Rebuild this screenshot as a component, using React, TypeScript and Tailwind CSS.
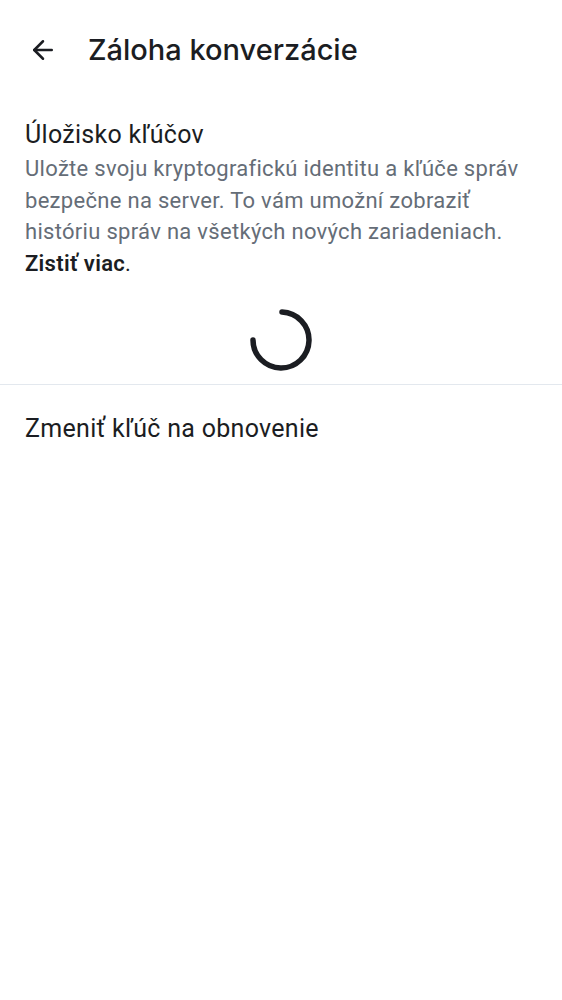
import { ArrowLeft } from "lucide-react";

export default function App() {
  return (
    <div className="min-h-[1000px] w-[562px] bg-white text-[#1b1d22]" style={{ fontFamily: "Roboto, 'Noto Sans', sans-serif" }}>
      {/* Top bar */}
      <header className="flex h-[100px] items-center pl-[28px]">
        <ArrowLeft className="h-[30px] w-[30px]" strokeWidth={2} />
        <h1 className="ml-[30px] text-[29px] font-medium" style={{ fontFamily: "Inter, Roboto, sans-serif" }}>
          Záloha konverzácie
        </h1>
      </header>

      {/* Key storage */}
      <section className="px-[25px] pt-[18px]">
        <h2 className="text-[25px] leading-[34px] tracking-[0.3px]">Úložisko kľúčov</h2>
        <p className="mt-[1px] text-[22px] leading-[31.5px] tracking-[0.3px] text-[#656d77]">
          Uložte svoju kryptografickú identitu a kľúče správ bezpečne na server. To vám umožní zobraziť históriu správ na všetkých nových zariadeniach.{" "}
          <span className="font-semibold text-[#1b1d22]">Zistiť viac</span>
          <span className="text-[#1b1d22]">.</span>
        </p>
      </section>

      {/* Spinner */}
      <div className="flex justify-center pt-[28px] pb-[11px]">
        <svg width="66" height="66" viewBox="0 0 66 66">
          <path d="M 34 5 A 28 28 0 1 1 5 33" fill="none" stroke="#1b1d22" strokeWidth="5.5" strokeLinecap="round" />
        </svg>
      </div>

      <div className="h-px bg-[#e3e8ee]" />

      <div className="flex h-[88px] items-center px-[25px]">
        <span className="text-[25px] tracking-[0.3px]">Zmeniť kľúč na obnovenie</span>
      </div>
    </div>
  );
}
